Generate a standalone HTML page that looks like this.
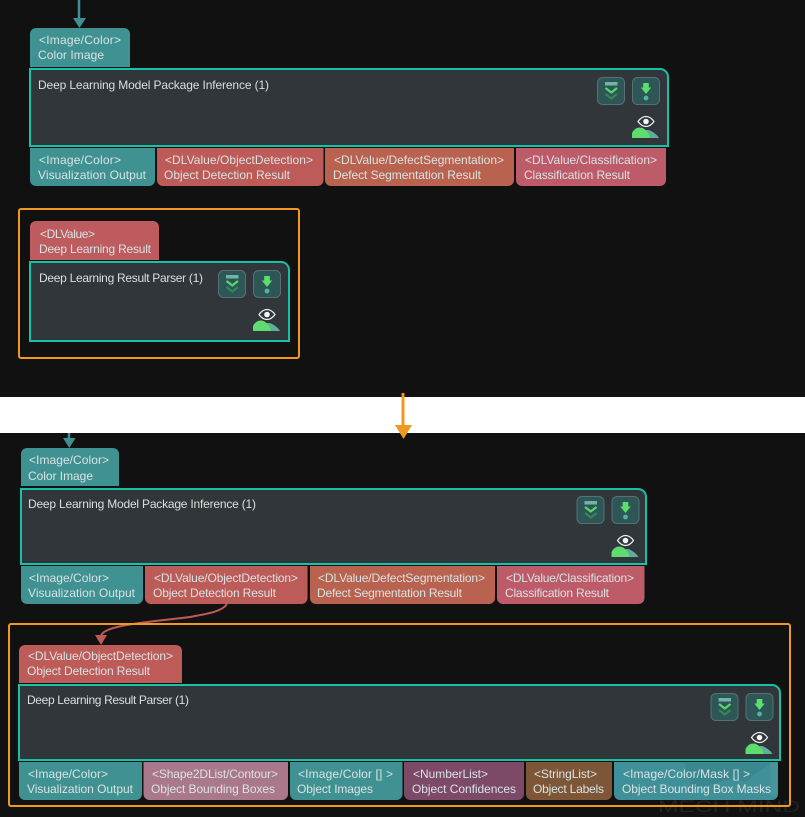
<!DOCTYPE html>
<html><head><meta charset="utf-8"><style>
html,body{margin:0;padding:0;background:#111112;width:805px;height:817px;overflow:hidden}
svg{display:block}
text{font-family:"Liberation Sans",sans-serif;font-size:12px;fill:#d9e3e3}
.n{fill:#dcdfdf}
</style></head><body>
<svg width="805" height="817" viewBox="0 0 805 817" xmlns="http://www.w3.org/2000/svg">
<defs>
<g id="ic">
<rect x="0.5" y="0.5" width="27" height="27" rx="5" fill="#2f5656" stroke="#557273"/>
<rect x="8" y="5" width="12.500" height="3.500" fill="#6fb5a5"/>
<path d="M8.500 11L14.300 15.500L20 11" fill="none" stroke="#56d86a" stroke-width="2.200"/>
<path d="M8.500 17L14.300 21.500L20 17" fill="none" stroke="#37855a" stroke-width="2.200"/>
<rect x="35.500" y="0.500" width="27" height="27" rx="5" fill="#2f5656" stroke="#557273"/>
<path d="M46.200 6H51.800V10.500H54.200L49 17L43.800 10.500H46.200Z" fill="#5ade6c"/>
<circle cx="49" cy="21" r="2.400" fill="#4fb5a0"/>
<path d="M46 61V54C48 53 52 52.500 54 54C58 56 61 59 62 61Z" fill="#5fae9c"/>
<path d="M35 61V56C37 52 40 50.500 43 50.500C47 50.500 52 55 53 61Z" fill="#5fdc6f"/>
<path d="M41 44.500C43.500 41 46 39.500 49 39.500C52 39.500 54.500 41 57 44.500C54.500 48 52 49.500 49 49.500C46 49.500 43.500 48 41 44.500Z" fill="none" stroke="#eef1f1" stroke-width="1.200"/>
<circle cx="49" cy="44.500" r="2.800" fill="#f4f6f6"/>
</g>
</defs>
<rect width="805" height="817" fill="#111112"/>

<!-- TOP -->
<path d="M79 0V20" stroke="#40908f" stroke-width="2.500"/>
<path d="M73 18H86L79.500 28Z" fill="#40908f"/>
<path d="M30 67V34a6 6 0 0 1 6-6H124a6 6 0 0 1 6 6V67Z" fill="#409192"/>
<text x="39" y="44" textLength="82">&lt;Image/Color&gt;</text>
<text x="38" y="59" textLength="66">Color Image</text>
<path d="M30 69H660a8 8 0 0 1 8 8V146H30Z" fill="#31363b" stroke="#14c2a7" stroke-width="2"/>
<text class="n" x="38" y="89" textLength="231">Deep Learning Model Package Inference (1)</text>
<use href="#ic" x="597" y="77"/>
<path d="M30 148H155V180a6 6 0 0 1-6 6H36a6 6 0 0 1-6-6Z" fill="#409192"/>
<path d="M157 148H323.500V180a6 6 0 0 1-6 6H163a6 6 0 0 1-6-6Z" fill="#bd5b58"/>
<path d="M325 148H514V180a6 6 0 0 1-6 6H331a6 6 0 0 1-6-6Z" fill="#b9624f"/>
<path d="M516 148H666V180a6 6 0 0 1-6 6H522a6 6 0 0 1-6-6Z" fill="#bd5b69"/>
<text x="39" y="164" textLength="82">&lt;Image/Color&gt;</text>
<text x="38" y="179" textLength="108">Visualization Output</text>
<text x="165" y="164" textLength="148">&lt;DLValue/ObjectDetection&gt;</text>
<text x="164" y="179" textLength="126">Object Detection Result</text>
<text x="334" y="164" textLength="170">&lt;DLValue/DefectSegmentation&gt;</text>
<text x="333" y="179" textLength="148">Defect Segmentation Result</text>
<text x="525" y="164" textLength="132">&lt;DLValue/Classification&gt;</text>
<text x="524" y="179" textLength="106">Classification Result</text>

<rect x="19" y="209" width="280" height="149" rx="2" fill="none" stroke="#f0981f" stroke-width="2"/>
<path d="M30 260V227a6 6 0 0 1 6-6H153a6 6 0 0 1 6 6V260Z" fill="#bd5b5e"/>
<text x="40" y="238" textLength="55">&lt;DLValue&gt;</text>
<text x="39" y="253" textLength="112">Deep Learning Result</text>
<path d="M30 262H281a8 8 0 0 1 8 8V341H30Z" fill="#31363b" stroke="#14c2a7" stroke-width="2"/>
<text class="n" x="39" y="282" textLength="164">Deep Learning Result Parser (1)</text>
<use href="#ic" x="218" y="270"/>

<!-- WHITE BAND -->
<rect x="0" y="397" width="805" height="36" fill="#fff"/>
<path d="M403 393V428" stroke="#f0981f" stroke-width="3"/>
<path d="M395 425H412L403.500 439Z" fill="#f0981f"/>

<!-- BOTTOM -->
<path d="M69 433V440" stroke="#40908f" stroke-width="2.500"/>
<path d="M63 438H75.500L69.300 448Z" fill="#40908f"/>
<path d="M21 486V454a6 6 0 0 1 6-6H113a6 6 0 0 1 6 6V486Z" fill="#409192"/>
<text x="29" y="464" textLength="80">&lt;Image/Color&gt;</text>
<text x="28" y="480" textLength="65">Color Image</text>
<path d="M21 489H638a8 8 0 0 1 8 8V564H21Z" fill="#31363b" stroke="#14c2a7" stroke-width="2"/>
<text class="n" x="28" y="508" textLength="228">Deep Learning Model Package Inference (1)</text>
<use href="#ic" x="576.500" y="496"/>
<path d="M21 566H143V598a6 6 0 0 1-6 6H27a6 6 0 0 1-6-6Z" fill="#409192"/>
<path d="M145 566H307.500V598a6 6 0 0 1-6 6H151a6 6 0 0 1-6-6Z" fill="#bd5b58"/>
<path d="M310 566H495V598a6 6 0 0 1-6 6H316a6 6 0 0 1-6-6Z" fill="#b9624f"/>
<path d="M497 566H644.500V598a6 6 0 0 1-6 6H503a6 6 0 0 1-6-6Z" fill="#bd5b69"/>
<text x="29" y="582" textLength="80">&lt;Image/Color&gt;</text>
<text x="28" y="597" textLength="107">Visualization Output</text>
<text x="154" y="582" textLength="144">&lt;DLValue/ObjectDetection&gt;</text>
<text x="153" y="597" textLength="123">Object Detection Result</text>
<text x="318" y="582" textLength="167">&lt;DLValue/DefectSegmentation&gt;</text>
<text x="317" y="597" textLength="145">Defect Segmentation Result</text>
<text x="506" y="582" textLength="128">&lt;DLValue/Classification&gt;</text>
<text x="505" y="597" textLength="104">Classification Result</text>

<path d="M227 604C222 612 205 614 190 617C150 622 100 625 101 637" fill="none" stroke="#bd5b58" stroke-width="2"/>
<path d="M95 635H107L101 645Z" fill="#bd5b58"/>

<!-- watermark text sits beneath the frame -->
<text x="658" y="812" textLength="142" lengthAdjust="spacingAndGlyphs" style="font-size:16.500px;fill:#212222">MECH MIND</text>

<rect x="9" y="624" width="781" height="182" rx="2" fill="none" stroke="#f0981f" stroke-width="2"/>
<path d="M19 683V651a6 6 0 0 1 6-6H176a6 6 0 0 1 6 6V683Z" fill="#bd5b58"/>
<text x="28" y="660" textLength="145">&lt;DLValue/ObjectDetection&gt;</text>
<text x="27" y="675" textLength="123">Object Detection Result</text>
<path d="M19 685H772a8 8 0 0 1 8 8V760H19Z" fill="#31363b" stroke="#14c2a7" stroke-width="2"/>
<text class="n" x="27" y="704" textLength="162">Deep Learning Result Parser (1)</text>
<use href="#ic" x="710.500" y="693"/>
<path d="M19 762H142V794a6 6 0 0 1-6 6H25a6 6 0 0 1-6-6Z" fill="#409192"/>
<path d="M143.500 762H288V794a6 6 0 0 1-6 6H149.500a6 6 0 0 1-6-6Z" fill="#a9788a"/>
<path d="M290 762H402.500V794a6 6 0 0 1-6 6H296a6 6 0 0 1-6-6Z" fill="#409192"/>
<path d="M404 762H524V794a6 6 0 0 1-6 6H410a6 6 0 0 1-6-6Z" fill="#7c4a66"/>
<path d="M526 762H612V794a6 6 0 0 1-6 6H532a6 6 0 0 1-6-6Z" fill="#7c5636"/>
<path d="M614 762H778V794a6 6 0 0 1-6 6H620a6 6 0 0 1-6-6Z" fill="#3f9098"/>
<!-- logo facets -->
<path d="M685 763H770L745 782L733 778L692 790Z" fill="#000" opacity="0.06"/>
<path d="M770 763H778V794L771 796Z" fill="#fff" opacity="0.04"/>
<text x="28" y="778" textLength="80">&lt;Image/Color&gt;</text>
<text x="27" y="793" textLength="106">Visualization Output</text>
<text x="152" y="778" textLength="126">&lt;Shape2DList/Contour&gt;</text>
<text x="151" y="793" textLength="124">Object Bounding Boxes</text>
<text x="298" y="778" textLength="95">&lt;Image/Color [] &gt;</text>
<text x="297" y="793" textLength="76">Object Images</text>
<text x="413" y="778" textLength="75">&lt;NumberList&gt;</text>
<text x="412" y="793" textLength="104">Object Confidences</text>
<text x="534" y="778" textLength="63">&lt;StringList&gt;</text>
<text x="533" y="793" textLength="71">Object Labels</text>
<text x="623" y="778" textLength="127">&lt;Image/Color/Mask [] &gt;</text>
<text x="622" y="793" textLength="149">Object Bounding Box Masks</text>
</svg>
</body></html>
